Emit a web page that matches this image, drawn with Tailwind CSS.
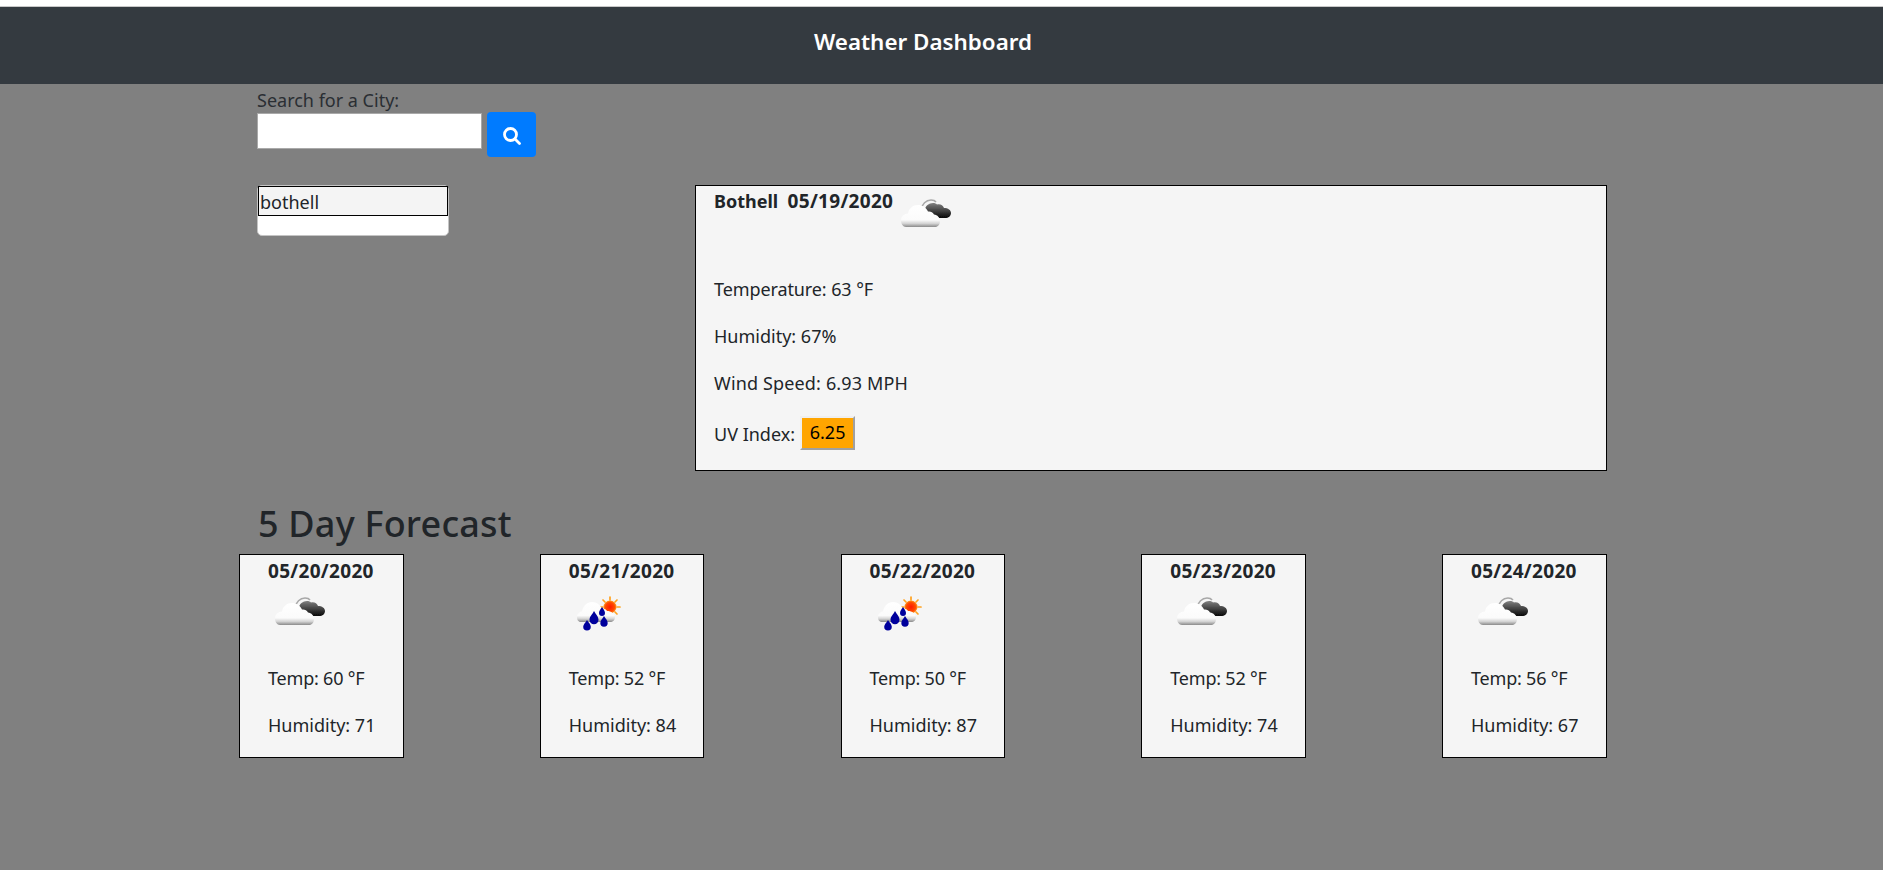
<!DOCTYPE html>
<html lang="en">
<head>
<meta charset="utf-8">
<title>Weather Dashboard</title>
<script src="https://cdn.jsdelivr.net/npm/@tailwindcss/browser@4"></script>
</head>
<body class="bg-[#808080] h-[870px] overflow-hidden text-[#212529] font-['Noto_Sans',sans-serif] text-[18px] leading-[27px]">
<svg width="0" height="0" class="absolute">
  <defs>
    <linearGradient id="w" x1="0" y1="0" x2="0" y2="1"><stop offset="0" stop-color="#fff"/><stop offset=".68" stop-color="#fbfbfb"/><stop offset=".84" stop-color="#d4d4d4"/><stop offset="1" stop-color="#8a8a8a"/></linearGradient>
    <linearGradient id="d" x1="0" y1="0" x2="0" y2="1"><stop offset="0" stop-color="#808080"/><stop offset=".55" stop-color="#3e3e3e"/><stop offset="1" stop-color="#050505"/></linearGradient>
    <radialGradient id="s"><stop offset="0" stop-color="#ff1a00"/><stop offset=".7" stop-color="#ff4a00"/><stop offset="1" stop-color="#ff9a20"/></radialGradient>
    <filter id="b" x="-10%" y="-10%" width="120%" height="120%"><feGaussianBlur stdDeviation=".5"/></filter>
    <symbol id="cloud" viewBox="0 0 50 50">
      <g filter="url(#b)">
        <path d="M20 20c1-6 5-10 10-10 2 0 4 .5 5 2" fill="none" stroke="#a8a8a8" stroke-width="1.500"/>
        <path d="M24 20c0-4 4-7 8-7 2 0 3 .5 4 1.500 3-1 6 .5 7 3.500 4 0 7 2 7 5 0 3-2.500 5-6 5H32c-4 0-8-4-8-8z" fill="url(#d)"/>
        <path d="M5 37c-3 0-5-3-5-6.500 0-4 3-7 7-7 1-5.500 5-8.500 10-8.500 4.500 0 8 2.500 10 6.500 2-.5 5 .5 6 3 3.500.5 6 3 6 6.500s-2 6-5 6z" fill="url(#w)"/>
      </g>
    </symbol>
    <symbol id="rain" viewBox="0 0 50 50">
      <g filter="url(#b)">
        <g stroke="#ffa21f" stroke-width="1.700" stroke-linecap="round"><path d="M34 9v3M34 26v3M24 19h3M41 19h3M27 12l2 2M39 24l2 2M41 12l-2 2M29 24l-2 2"/></g>
        <circle cx="34" cy="19" r="6.500" fill="url(#s)"/>
        <path d="M5 34c-3 0-4-2.500-4-5 0-3 2.500-5.500 5-5.500 1-5.500 5-9.500 10-9.500 5 0 8 3 10 7 2-.5 4 .5 5 2 4 0 8 2.500 8 6 0 3-2 5-5 5z" fill="url(#w)"/>
        <g fill="#00009c">
          <path d="M11 32c1.800 2.800 3.800 4.500 3.800 6.800a3.800 3.800 0 0 1-7.600 0c0-2.300 2.300-4 3.800-6.800z"/>
          <path d="M18 23c2 3.800 4.500 5.500 4.500 8.800a4.500 4.500 0 0 1-9 0c0-3.300 2.800-5 4.500-8.800z"/>
          <path d="M26 19c1.300 2.200 3 3.800 3 6a3 3 0 0 1-6 0c0-2.200 1.700-3.800 3-6z"/>
          <path d="M28 28c1.700 2.800 3.700 4.500 3.700 7a3.700 3.700 0 0 1-7.400 0c0-2.500 2.200-4.200 3.700-7z"/>
        </g>
      </g>
    </symbol>
  </defs>
</svg>

<div class="h-[6px] bg-white"></div>
<header class="h-[78px] border-t border-[#c8c8c8] bg-[#343a40] flex items-center justify-center pb-[8px] pr-[37px]">
  <h1 class="text-white text-[22.4px] font-semibold">Weather Dashboard</h1>
</header>

<main>
  <section class="pl-[257px] pt-[3px]">
    <label class="block h-[26px] leading-[27px] text-[#2a2e33] text-[18px]">Search for a City:</label>
    <div class="flex items-start gap-[5px]">
      <input type="text" class="w-[225px] h-[36px] bg-white border border-[#a9a9a9]">
      <button class="w-[49px] h-[45px] -mt-[1px] bg-[#007bff] rounded-[4px] flex items-center justify-center" aria-label="Search">
        <svg class="mt-[3px] ml-[1px]" width="18" height="18" viewBox="0 0 18 18" fill="none" stroke="white" stroke-width="2.800" stroke-linecap="round"><circle cx="7.500" cy="7.500" r="6"/><path d="M12 12l4.500 4.500"/></svg>
      </button>
    </div>
  </section>

  <section class="flex items-start pl-[257px] mt-[28px]">
    <div class="w-[192px] h-[51px] bg-white rounded-[5px] border border-[#c4c4c4] shrink-0">
      <div class="h-[30px] bg-[#f4f4f4] border border-black px-[1px] leading-[30px]">bothell</div>
    </div>
    <article class="ml-[246px] w-[912px] h-[286px] bg-[#f5f5f5] border border-black pl-[18px]">
      <div class="flex items-start h-[60px]">
        <h2 class="font-bold text-[18px] leading-[30px] whitespace-pre">Bothell  <span class="text-[19px] tracking-[0.3px]">05/19/2020</span></h2>
        <svg class="ml-[8px] mt-[4px]" width="50" height="50"><use href="#cloud"/></svg>
      </div>
      <p class="mt-[30px] h-[27px] tracking-[-0.1px]">Temperature: 63 °F</p>
      <p class="mt-[20px] h-[27px]">Humidity: 67%</p>
      <p class="mt-[20px] h-[27px] tracking-[0.15px]">Wind Speed: 6.93 MPH</p>
      <p class="mt-[20px] flex items-center h-[34px]">UV Index:
        <span class="ml-[5px] w-[55px] h-[34px] -mt-[3px] bg-[#ffa500] border-2 border-t-[#efefef] border-l-[#efefef] border-r-[#a0a0a0] border-b-[#a0a0a0] text-black flex items-center justify-center">6.25</span>
      </p>
    </article>
  </section>

  <h2 class="pl-[258px] mt-[29px] h-[54px] text-[36px] leading-[48px] font-medium tracking-[0.2px] text-[#212529]">5 Day Forecast</h2>

  <section class="flex justify-between w-[1367.5px] ml-[239px]">
    <div class="w-[164.5px] h-[204px] bg-[#f5f5f5] border border-black pl-[28px]">
      <h3 class="font-bold text-[19px] tracking-[0.3px] leading-[33px] h-[33px]">05/20/2020</h3>
      <svg class="block ml-[7px]" width="50" height="50"><use href="#cloud"/></svg>
      <p class="mt-[27px] h-[27px] tracking-[-0.2px]">Temp: 60 °F</p><p class="mt-[20px] h-[27px]">Humidity: 71</p>
    </div>
    <div class="w-[164.5px] h-[204px] bg-[#f5f5f5] border border-black pl-[28px]">
      <h3 class="font-bold text-[19px] tracking-[0.3px] leading-[33px] h-[33px]">05/21/2020</h3>
      <svg class="block ml-[7px]" width="50" height="50"><use href="#rain"/></svg>
      <p class="mt-[27px] h-[27px] tracking-[-0.2px]">Temp: 52 °F</p><p class="mt-[20px] h-[27px]">Humidity: 84</p>
    </div>
    <div class="w-[164.5px] h-[204px] bg-[#f5f5f5] border border-black pl-[28px]">
      <h3 class="font-bold text-[19px] tracking-[0.3px] leading-[33px] h-[33px]">05/22/2020</h3>
      <svg class="block ml-[7px]" width="50" height="50"><use href="#rain"/></svg>
      <p class="mt-[27px] h-[27px] tracking-[-0.2px]">Temp: 50 °F</p><p class="mt-[20px] h-[27px]">Humidity: 87</p>
    </div>
    <div class="w-[164.5px] h-[204px] bg-[#f5f5f5] border border-black pl-[28px]">
      <h3 class="font-bold text-[19px] tracking-[0.3px] leading-[33px] h-[33px]">05/23/2020</h3>
      <svg class="block ml-[7px]" width="50" height="50"><use href="#cloud"/></svg>
      <p class="mt-[27px] h-[27px] tracking-[-0.2px]">Temp: 52 °F</p><p class="mt-[20px] h-[27px]">Humidity: 74</p>
    </div>
    <div class="w-[164.5px] h-[204px] bg-[#f5f5f5] border border-black pl-[28px]">
      <h3 class="font-bold text-[19px] tracking-[0.3px] leading-[33px] h-[33px]">05/24/2020</h3>
      <svg class="block ml-[7px]" width="50" height="50"><use href="#cloud"/></svg>
      <p class="mt-[27px] h-[27px] tracking-[-0.2px]">Temp: 56 °F</p><p class="mt-[20px] h-[27px]">Humidity: 67</p>
    </div>
  </section>
</main>
</body>
</html>
